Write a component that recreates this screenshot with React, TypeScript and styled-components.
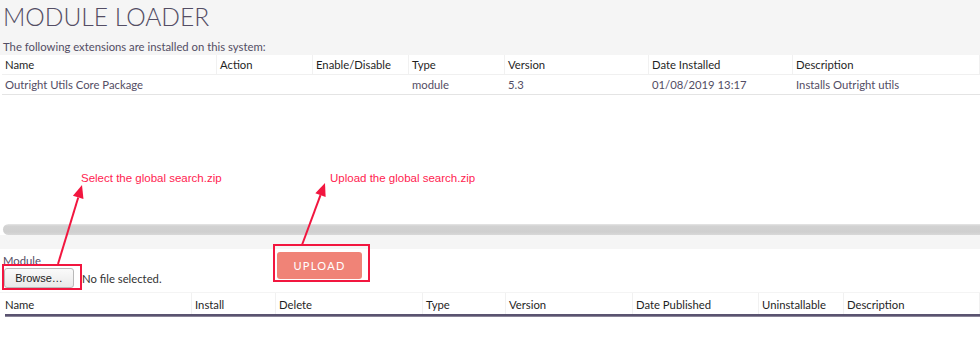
import React from "react";
import styled, { createGlobalStyle } from "styled-components";

const Global = createGlobalStyle`
  html, body { margin: 0; padding: 0; background: #ffffff; }
  body { font-family: Lato, "Open Sans", sans-serif; color: #534d64; }
  * { box-sizing: border-box; }
`;

const Page = styled.div`
  position: relative;
  width: 980px;
  height: 337px;
  overflow: hidden;
  background: #ffffff;
`;

const TopBand = styled.div`
  background: #f5f5f5;
  height: 55px;
  padding: 2px 0 0 3px;
`;

const Title = styled.h1`
  margin: 0;
  font-family: Lato, sans-serif;
  font-weight: 300;
  font-size: 24.6px;
  line-height: 30px;
  letter-spacing: 0;
  color: #534d64;
`;

const Intro = styled.div`
  margin-top: 8px;
  font-size: 11.3px;
  line-height: 13px;
  color: #534d64;
`;

const ScrollArea = styled.div`
  height: 169px;
  padding-left: 2px;
  background: #ffffff;
`;

const Grid = styled.div<{ $cols: string }>`
  display: grid;
  grid-template-columns: ${(p) => p.$cols};
  font-size: 11.3px;
`;

const HeadCell = styled.div<{ $h: number; $pt: number }>`
  height: ${(p) => p.$h}px;
  display: flex;
  align-items: center;
  padding: ${(p) => p.$pt}px 0 0 3px;
  color: #1f1f1f;
  border-right: 1px solid #f1f1f1;
  white-space: nowrap;
`;

const BodyCell = styled.div`
  height: 21px;
  display: flex;
  align-items: center;
  padding-left: 3px;
  color: #534d64;
  border-top: 1px solid #f0f0f0;
  border-bottom: 1px solid #e4e4e4;
  white-space: nowrap;
`;

const Scrollbar = styled.div`
  margin-left: 3px;
  height: 11px;
  border-radius: 6px 0 0 6px;
  background: linear-gradient(#e6e6e6 0, #d2d2d2 2px, #cfcfcf 8px, #d8d8d8 100%);
`;

const GrayStrip = styled.div`
  height: 14px;
  background: #f5f5f5;
`;

const UploadForm = styled.div`
  display: flex;
  align-items: flex-start;
  height: 43px;
  padding: 1px 0 0 3px;
`;

const FileField = styled.div`
  display: flex;
  flex-direction: column;
  width: 274px;
`;

const FieldLabel = styled.div`
  font-size: 11.3px;
  line-height: 13px;
  margin-top: 4px;
  color: #534d64;
`;

const FileRow = styled.div`
  display: flex;
  align-items: center;
  gap: 8px;
  margin-top: 1px;
`;

const BrowseButton = styled.button`
  width: 70px;
  height: 20px;
  margin-left: 1px;
  padding: 0;
  font-family: "Liberation Sans", Arial, sans-serif;
  font-size: 11px;
  color: #222;
  background: linear-gradient(#fafafa, #e9e9e9);
  border: 1px solid #b9b9b9;
  border-radius: 3px;
`;

const NoFile = styled.span`
  font-size: 11.3px;
  color: #333;
`;

const UploadButton = styled.button`
  width: 85px;
  height: 27px;
  margin-top: 2px;
  padding: 0;
  border: none;
  border-radius: 3px;
  background: #f08377;
  color: #ffffff;
  font-family: Lato, sans-serif;
  font-size: 11px;
  letter-spacing: 1.3px;
`;

const Table2 = styled.div`
  padding-left: 2px;
  border-top: 1px solid #f4f4f4;
`;

const ThickRule = styled.div`
  margin-left: 3px;
  height: 3px;
  background: #5a5370;
  border-bottom: 1px solid #8a8598;
`;

const Overlay = styled.svg`
  position: absolute;
  left: 0;
  top: 0;
  pointer-events: none;
`;

const Note = styled.span<{ $x: number; $y: number }>`
  position: absolute;
  left: ${(p) => p.$x}px;
  top: ${(p) => p.$y}px;
  font-family: "Liberation Sans", Arial, sans-serif;
  font-size: 11.5px;
  color: #ff2350;
  white-space: nowrap;
`;

const cols1 = "215px 96px 96px 96px 144px 144px 1fr";
const cols2 = "190px 84px 147px 83px 127px 126px 85px 1fr";

const head1 = ["Name", "Action", "Enable/Disable", "Type", "Version", "Date Installed", "Description"];
const row1 = ["Outright Utils Core Package", "", "", "module", "5.3", "01/08/2019 13:17", "Installs Outright utils"];
const head2 = ["Name", "Install", "Delete", "Type", "Version", "Date Published", "Uninstallable", "Description"];

const RED = "#f2163f";

function Arrow({ x1, y1, x2, y2 }: { x1: number; y1: number; x2: number; y2: number }) {
  const ang = Math.atan2(y2 - y1, x2 - x1);
  const len = 13;
  const w = 5.5;
  const bx = x2 - len * Math.cos(ang);
  const by = y2 - len * Math.sin(ang);
  const px = -Math.sin(ang) * w;
  const py = Math.cos(ang) * w;
  return (
    <g>
      <line x1={x1} y1={y1} x2={bx} y2={by} stroke={RED} strokeWidth={2} />
      <polygon points={`${x2},${y2} ${bx + px},${by + py} ${bx - px},${by - py}`} fill={RED} />
    </g>
  );
}

export default function App() {
  return (
    <Page>
      <Global />
      <TopBand>
        <Title>MODULE LOADER</Title>
        <Intro>The following extensions are installed on this system:</Intro>
      </TopBand>
      <ScrollArea>
        <Grid $cols={cols1}>
          {head1.map((h) => (
            <HeadCell key={h} $h={19} $pt={0}>{h}</HeadCell>
          ))}
          {row1.map((c, i) => (
            <BodyCell key={i}>{c}</BodyCell>
          ))}
        </Grid>
      </ScrollArea>
      <Scrollbar />
      <GrayStrip />
      <UploadForm>
        <FileField>
          <FieldLabel>Module</FieldLabel>
          <FileRow>
            <BrowseButton>Browse…</BrowseButton>
            <NoFile>No file selected.</NoFile>
          </FileRow>
        </FileField>
        <UploadButton>UPLOAD</UploadButton>
      </UploadForm>
      <Table2>
        <Grid $cols={cols2}>
          {head2.map((h, i) => (
            <HeadCell key={i} $h={21} $pt={1}>{h}</HeadCell>
          ))}
        </Grid>
        <ThickRule />
      </Table2>

      <Overlay width={980} height={337}>
        <rect x={3} y={265} width={78} height={24} fill="none" stroke={RED} strokeWidth={2} />
        <rect x={274} y={245} width={95} height={36} fill="none" stroke={RED} strokeWidth={2} />
        <Arrow x1={58} y1={264} x2={82} y2={185} />
        <Arrow x1={302} y1={245} x2={325} y2={183} />
      </Overlay>
      <Note $x={81} $y={172}>Select the global search.zip</Note>
      <Note $x={330} $y={172}>Upload the global search.zip</Note>
    </Page>
  );
}
